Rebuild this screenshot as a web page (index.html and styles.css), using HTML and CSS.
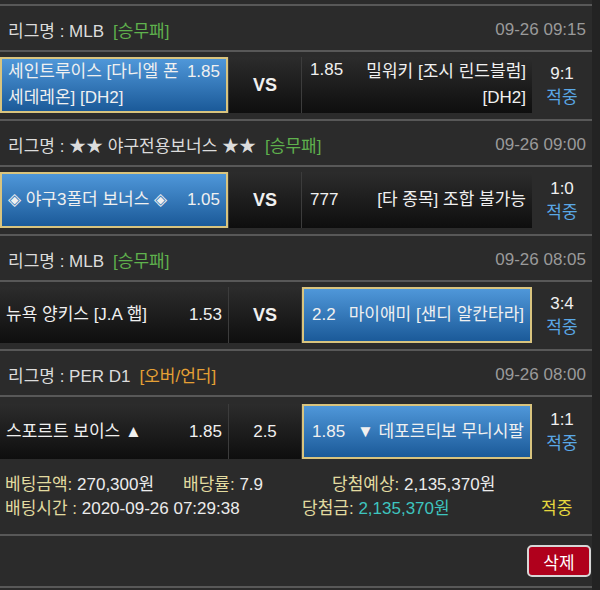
FILE: index.html
```html
<!DOCTYPE html>
<html>
<head>
	<meta charset="utf-8">
	<title>배팅내역</title>
	<link rel="stylesheet" href="styles.css">
</head>
<body>
	<div class="slip">

		<div class="game">
			<div class="league">
				<span class="lname">리그명 : MLB</span>
				<span class="ltype win">[승무패]</span>
				<span class="ltime">09-26 09:15</span>
			</div>
			<div class="match">
				<div class="cell home picked">
					<span class="tname">세인트루이스 [다니엘 폰 세데레온] [DH2]</span>
					<span class="odds top">1.85</span>
				</div>
				<div class="cell mid vs">VS</div>
				<div class="cell away">
					<span class="odds top">1.85</span>
					<span class="tname">밀워키 [조시 린드블럼] [DH2]</span>
				</div>
				<div class="result">
					<div>9:1</div>
					<div class="hit">적중</div>
				</div>
			</div>
		</div>

		<div class="game">
			<div class="league">
				<span class="lname">리그명 : ★★ 야구전용보너스 ★★</span>
				<span class="ltype win">[승무패]</span>
				<span class="ltime">09-26 09:00</span>
			</div>
			<div class="match">
				<div class="cell home picked">
					<span class="tname">◈ 야구3폴더 보너스 ◈</span>
					<span class="odds">1.05</span>
				</div>
				<div class="cell mid vs">VS</div>
				<div class="cell away">
					<span class="odds">777</span>
					<span class="tname">[타 종목] 조합 불가능</span>
				</div>
				<div class="result">
					<div>1:0</div>
					<div class="hit">적중</div>
				</div>
			</div>
		</div>

		<div class="game">
			<div class="league">
				<span class="lname">리그명 : MLB</span>
				<span class="ltype win">[승무패]</span>
				<span class="ltime">09-26 08:05</span>
			</div>
			<div class="match">
				<div class="cell home">
					<span class="tname">뉴욕 양키스 [J.A 햅]</span>
					<span class="odds">1.53</span>
				</div>
				<div class="cell mid vs">VS</div>
				<div class="cell away picked">
					<span class="odds">2.2</span>
					<span class="tname">마이애미 [샌디 알칸타라]</span>
				</div>
				<div class="result">
					<div>3:4</div>
					<div class="hit">적중</div>
				</div>
			</div>
		</div>

		<div class="game last">
			<div class="league">
				<span class="lname">리그명 : PER D1</span>
				<span class="ltype over">[오버/언더]</span>
				<span class="ltime">09-26 08:00</span>
			</div>
			<div class="match">
				<div class="cell home">
					<span class="tname">스포르트 보이스 ▲</span>
					<span class="odds">1.85</span>
				</div>
				<div class="cell mid">2.5</div>
				<div class="cell away picked">
					<span class="odds">1.85</span>
					<span class="tname">▼ 데포르티보 무니시팔</span>
				</div>
				<div class="result">
					<div>1:1</div>
					<div class="hit">적중</div>
				</div>
			</div>
		</div>

		<div class="info">
			<div class="info-row">
				<span class="c1"><span class="lbl">베팅금액:</span> 270,300원</span>
				<span class="c2"><span class="lbl">배당률:</span> 7.9</span>
				<span><span class="lbl">당첨예상:</span> 2,135,370원</span>
			</div>
			<div class="info-row">
				<span class="d1"><span class="lbl">배팅시간 :</span> 2020-09-26 07:29:38</span>
				<span class="d2"><span class="lbl">당첨금:</span> <span class="won">2,135,370원</span></span>
				<span class="done">적중</span>
			</div>
		</div>

		<div class="actions">
			<button class="del-btn">삭제</button>
		</div>

	</div>
</body>
</html>
```

FILE: styles.css
```css
body {
	margin: 0;
	background: #232323;
	font-family: "Liberation Sans", "Noto Sans CJK KR", sans-serif;
	font-size: 17px;
	color: #e6e6e6;
}

.slip {
	width: 592px;
	height: 590px;
	padding-top: 4px;
	box-sizing: border-box;
	background: #2b2b2b;
}

.game {
	border-top: 2px solid #585858;
}

.league {
	display: flex;
	align-items: center;
	height: 46px;
	padding: 3px 6px 0 8px;
	box-sizing: border-box;
	border-bottom: 2px solid #585858;
	color: #dcdcdc;
}
.ltype {
	margin-left: 9px;
}
.ltype.win {
	color: #5fb14d;
}
.ltype.over {
	color: #e5a035;
}
.ltime {
	margin-left: auto;
	color: #9a9a9a;
}

.match {
	display: flex;
	align-items: center;
	height: 67px;
}
.game.last .match {
	height: auto;
	padding-top: 7px;
}

.cell {
	display: flex;
	align-items: center;
	min-height: 55px;
	box-sizing: border-box;
	padding: 0 6px;
	line-height: 26px;
	color: #f0f0f0;
	background: linear-gradient(#2c2c2c, #0e0e0e);
}
.match .cell {
	align-self: stretch;
	margin: 5px 0 6px;
}
.game.last .match .cell {
	margin: 0;
}
.cell.picked {
	border: 2px solid #d9c47e;
	background: linear-gradient(#4f97d9, #1b5a99);
}
.odds.top {
	align-self: flex-start;
}

.home {
	width: 228px;
}
.home .tname {
	flex: 1;
}
.home .odds {
	margin-left: 6px;
}

.mid {
	width: 74px;
	justify-content: center;
	border-left: 1px solid #3c3c3c;
	border-right: 1px solid #3c3c3c;
}
.vs {
	font-weight: bold;
	font-size: 18px;
}

.away {
	width: 230px;
}
.away .odds {
	margin-right: 10px;
	padding-left: 2px;
}
.away .tname {
	flex: 1;
	text-align: right;
}

.result {
	width: 60px;
	display: flex;
	flex-direction: column;
	justify-content: center;
	align-items: center;
	line-height: 24px;
	color: #f0f0f0;
}
.result .hit {
	color: #5aa8e6;
}

.info {
	padding: 14px 5px 13px;
	line-height: 24px;
	border-bottom: 2px solid #585858;
	color: #ececec;
}
.info-row {
	display: flex;
}
.lbl {
	color: #e2dba0;
}
.c1 {
	width: 178px;
}
.c2 {
	width: 149px;
}
.d1 {
	width: 297px;
}
.d2 {
	width: 239px;
}
.won {
	color: #3ec4bf;
}
.done {
	color: #e6d83e;
}

.actions {
	display: flex;
	justify-content: flex-end;
	padding: 9px 1px 9px 0;
	border-bottom: 2px solid #585858;
}
.del-btn {
	width: 64px;
	height: 32px;
	border: 2px solid #d6d6d6;
	border-radius: 5px;
	background: #b0001c;
	color: #fff;
	font-family: "Liberation Sans", "Noto Sans CJK KR", sans-serif;
	font-size: 17px;
}
```
